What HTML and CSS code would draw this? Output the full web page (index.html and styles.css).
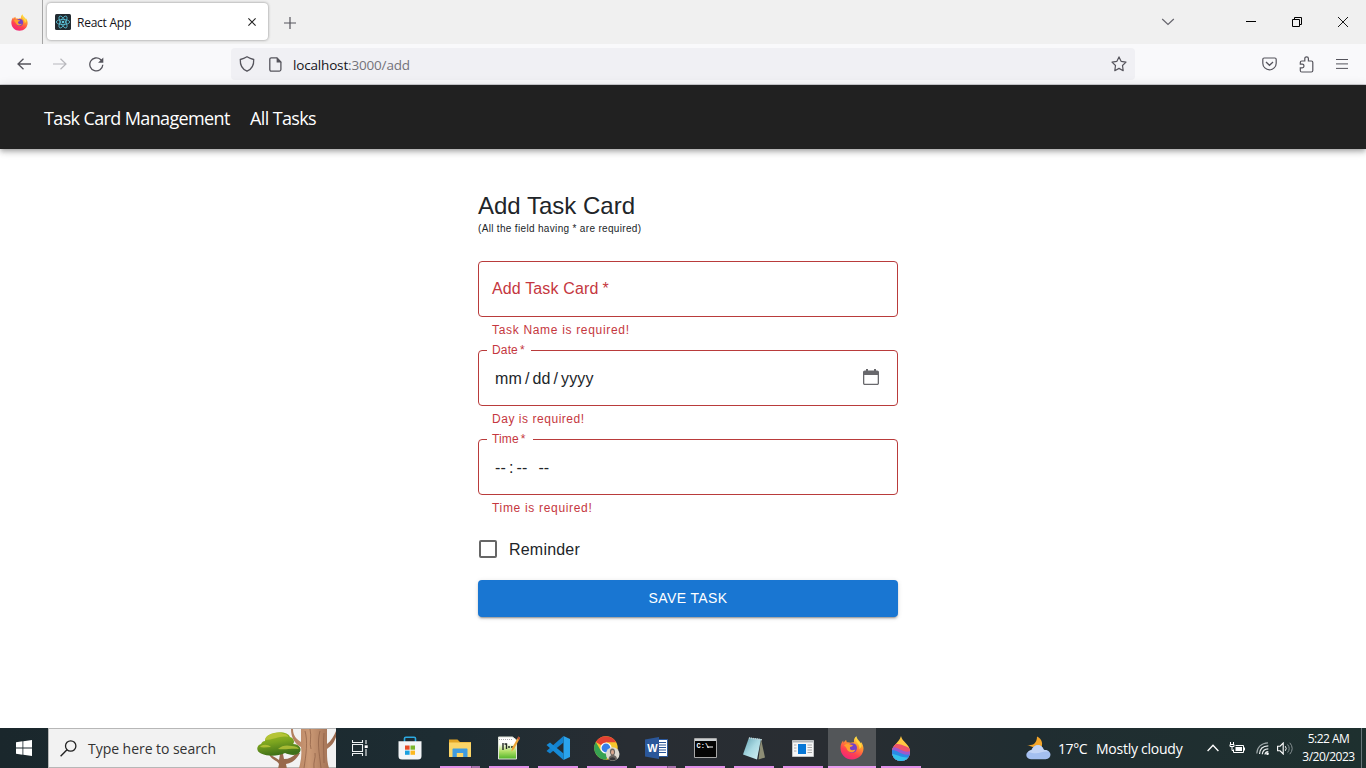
FILE: index.html
```html
<!DOCTYPE html>
<html lang="en">
<head>
<meta charset="utf-8">
<title>React App</title>
<link rel="stylesheet" href="styles.css">
</head>
<body>
<svg class="defs" width="0" height="0" aria-hidden="true">
  <defs>
    <linearGradient id="flame" x1=".8" y1="0" x2=".3" y2="1"><stop offset="0" stop-color="#fff44f"/><stop offset=".35" stop-color="#ff9a2e"/><stop offset=".7" stop-color="#ff4050"/><stop offset="1" stop-color="#f0247c"/></linearGradient>
    <symbol id="firefox" viewBox="0 0 24 24">
      <path fill="url(#flame)" d="M12 23.500C5.700 23.500.500 18.500.500 12.200c0-3 .8-5.600 2.600-7.700l.5 2.200C4.500 5.500 5 4.700 6.100 4l.7 2.300c1.400-.3 2.700 0 3.700.5 1.200-.5 2.300-.7 3.600-.6C13.500 3.700 14.600 1.500 16.500.300c.2 2.500 2 3.800 3.400 5.400l.9 1.800.2-1.600c1.700 2 2.500 4.200 2.500 6.700 0 6.300-5.100 10.900-11.500 10.900z"/>
      <circle cx="12.200" cy="12" r="4.800" fill="#7542c8"/>
      <path fill="#ffa02e" d="M4 9.500c2.100-2.100 4.400-2.200 6.100-.9l2.900.7c-.4 1.100-2.100 1.300-2.900 1.800-.7 1.700.4 3.200 2.200 3.200 1.300 0 2-.7 3-.4-1.200 2.400-4.500 3.300-6.900 1.300C6.600 13.700 6.700 11 4 9.500z"/>
      <path fill="#ffd83c" d="M16.300 2c-2 3.800 4.300 6 3 10.900 2.300-1.400 2.700-3.700 1.700-5.200-1.300-1.600-4.200-3-4.700-5.700z"/>
    </symbol>
  </defs>
</svg>
<div class="screen">
  <header class="tabstrip">
    <div class="pinned"><svg width="17" height="17"><use href="#firefox"/></svg></div>
    <div class="tab">
      <svg class="favicon" width="16" height="16" viewBox="0 0 16 16"><rect width="16" height="16" rx="1.500" fill="#222b31"/><g fill="none" stroke="#5cc4da" stroke-width=".8"><ellipse cx="8" cy="8" rx="6.700" ry="2.600"/><ellipse cx="8" cy="8" rx="6.700" ry="2.600" transform="rotate(60 8 8)"/><ellipse cx="8" cy="8" rx="6.700" ry="2.600" transform="rotate(120 8 8)"/></g><circle cx="8" cy="8" r="1.300" fill="#5cc4da"/></svg>
      <span class="tab-title">React App</span>
      <svg class="tab-close" width="8" height="8" viewBox="0 0 8 8"><path d="M.4.4l7.200 7.200M7.600.4L.4 7.600" stroke="#222" stroke-width="1.100"/></svg>
    </div>
    <svg class="newtab" width="12" height="12" viewBox="0 0 12 12"><path d="M6 0v12M0 6h12" stroke="#55545c" stroke-width="1.200"/></svg>
    <div class="window-controls">
      <svg class="chev" width="14" height="8" viewBox="0 0 14 8"><path d="M1.200 1L7 6.500 12.800 1" fill="none" stroke="#66656d" stroke-width="1.200"/></svg>
      <svg class="min" width="10" height="10" viewBox="0 0 10 10"><path d="M0 4.500h10" stroke="#000"/></svg>
      <svg class="max" width="10" height="10" viewBox="0 0 10 10"><path d="M.5 2.500h7v7h-7zM2.500 2.500v-2h7v7h-2" fill="none" stroke="#000"/></svg>
      <svg class="cls" width="10" height="10" viewBox="0 0 10 10"><path d="M0 0l10 10M10 0L0 10" stroke="#000" stroke-width=".9"/></svg>
    </div>
  </header>
  <nav class="toolbar">
    <svg class="back" width="14" height="12" viewBox="0 0 14 12"><path d="M14 6H1M6.500.7L1 6l5.500 5.300" fill="none" stroke="#55545c" stroke-width="1.300"/></svg>
    <svg class="fwd" width="14" height="12" viewBox="0 0 14 12"><path d="M0 6h13M7.500.7L13 6l-5.500 5.300" fill="none" stroke="#b8b8bd" stroke-width="1.200"/></svg>
    <svg class="reload" width="15" height="15" viewBox="0 0 15 15"><path d="M13.800 7.800A6.500 6.500 0 1 1 11.600 2.500L13 4" fill="none" stroke="#55545c" stroke-width="1.300"/><path d="M14.300.5v5.200H9.100z" fill="#55545c"/></svg>
    <div class="urlbar">
      <svg class="shield" width="16" height="16" viewBox="0 0 16 16"><path d="M8 .8C6 2 4 2.900 1.300 3.500c-.3 5.500 1.700 9.600 6.700 11.700 5-2.100 7-6.200 6.700-11.700C12 2.900 10 2 8 .8z" fill="none" stroke="#55545c" stroke-width="1.300"/></svg>
      <svg class="page" width="13" height="15" viewBox="0 0 13 15"><path d="M2.300.9H8l3.900 4v7.700c0 .9-.6 1.500-1.500 1.500H2.300c-.9 0-1.500-.6-1.500-1.500V2.400C.8 1.500 1.400.9 2.300.9z" fill="none" stroke="#55545c" stroke-width="1.300"/><path d="M7.600.5v4.900h4.900z" fill="#55545c"/></svg>
      <span class="url">localhost<span class="url-dim">:3000/add</span></span>
      <svg class="star" width="16" height="16" viewBox="0 0 16 16"><path d="M8 .9l2.100 4.400 4.900.8-3.500 3.400.7 5.200L8 12.400l-4.200 2.300.7-5.200L1 6.100l4.900-.8z" fill="none" stroke="#55545c" stroke-width="1.200" stroke-linejoin="round"/></svg>
    </div>
    <svg class="pocket" width="15" height="14" viewBox="0 0 15 14"><path d="M2.200 1h10.600c.8 0 1.400.6 1.400 1.400v3.900C14.200 10 11 12.800 7.500 12.800S.8 10 .8 6.300V2.400C.8 1.600 1.400 1 2.200 1z" fill="none" stroke="#55545c" stroke-width="1.200"/><path d="M4 5l3.500 3.300L11 5" fill="none" stroke="#55545c" stroke-width="1.300"/></svg>
    <svg class="puzzle" width="15" height="17" viewBox="0 0 15 17"><path d="M1.300 8.200V6.500c0-1 .5-1.500 1.500-1.500h3V2.600c0-2.300 3.600-2.300 3.600 0V5h3c1 0 1.400.5 1.400 1.500v8c0 1-.5 1.500-1.500 1.500H2.800c-1 0-1.500-.5-1.500-1.500v-2.600h1.900c2.400 0 2.400-3.700 0-3.700z" fill="none" stroke="#55545c" stroke-width="1.200"/></svg>
    <svg class="burger" width="12" height="10" viewBox="0 0 12 10"><path d="M0 .5h12M0 4.900h12M0 9.400h12" stroke="#55545c"/></svg>
  </nav>
  <div class="appbar">
    <a class="brand">Task Card Management</a>
    <a class="all">All Tasks</a>
  </div>
  <main class="content">
    <form class="form">
      <h1 class="title">Add Task Card</h1>
      <p class="hint">(All the field having * are required)</p>
      <div class="field"><span class="placeholder">Add Task Card<span class="ast">*</span></span></div>
      <p class="helper">Task Name is required!</p>
      <div class="field"><span class="label date">Date<span class="ast">*</span></span><span class="value">mm<i>/</i>dd<i>/</i>yyyy</span>
        <svg class="calendar" width="16" height="16" viewBox="0 0 16 16"><path d="M3 0h2v1.500h6V0h2v1.500h1.200c1 0 1.800.8 1.800 1.800v10.900c0 1-.8 1.800-1.800 1.800H1.800C.8 16 0 15.200 0 14.200V3.300c0-1 .8-1.800 1.800-1.800H3zM1.300 6v8.200c0 .4.2.6.6.6h12.200c.4 0 .6-.2.6-.6V6z" fill="#68686c"/></svg>
      </div>
      <p class="helper day">Day is required!</p>
      <div class="field"><span class="label time">Time<span class="ast">*</span></span><span class="value clock">--<i>:</i>--<b>--</b></span></div>
      <p class="helper">Time is required!</p>
      <div class="reminder"><span class="box"></span><span class="reminder-text">Reminder</span></div>
      <div class="save"><span>SAVE TASK</span></div>
    </form>
  </main>
  <footer class="taskbar">
    <div class="start"><svg width="16" height="16" viewBox="0 0 16 16" fill="#fff"><path d="M0 2.200l6.500-.9v6.300H0zM7.300 1.200L16 0v7.600H7.300zM0 8.400h6.500v6.300L0 13.800zM7.300 8.400H16V16l-8.700-1.200z"/></svg></div>
    <div class="search">
      <svg class="lens" width="17" height="17" viewBox="0 0 17 17"><circle cx="10.700" cy="6" r="5.200" fill="none" stroke="#222" stroke-width="1.300"/><path d="M7 9.800L.6 16.300" stroke="#222" stroke-width="1.400"/></svg>
      <span class="search-text">Type here to search</span>
      <svg class="trees" width="80" height="39" viewBox="0 0 80 39">
        <defs><linearGradient id="bark" x1="0" x2="1" y1="0" y2="0"><stop offset="0" stop-color="#b07c5c"/><stop offset=".4" stop-color="#cc9a76"/><stop offset="1" stop-color="#96664b"/></linearGradient><linearGradient id="leaf" x1="0" x2=".3" y1="0" y2="1"><stop offset="0" stop-color="#a9bf26"/><stop offset=".5" stop-color="#7ba41f"/><stop offset="1" stop-color="#3f7018"/></linearGradient></defs>
        <path d="M13 25l7 4 3 2 1-6h3l1 5c5 0 9-2 12-6h4c-4 7-8 10-14 11l1 5h-9l1-5c-2-4-8-4-10-10z" fill="#98694c"/>
        <path d="M5 24.500c-5-2-5-8 0-9.500 1-2 2-3 4-3 0-5 5-7 9-8 7-2 15 0 16 4 4 1 5 5 3 7 6 0 10 5 6 9-3 3-10 2-14 0-7 3-16 4-24 .5z" fill="url(#leaf)"/>
        <path d="M9 11c1-6 12-9 19-6 3 0 4 2 4 3-7-2-14 3-23 3zM4 18c2-3 8-3 11 0-4 0-7 1-11 0zM22 20c4-4 9-4 14-3 3 0 6 1 7 3-7-1-13 1-21 0z" fill="#c0ca3c" opacity=".75"/>
        <path d="M35 0h2c0 6 3 10 8 13V0h26v15c4-3 7-8 9-13v6c-2 6-5 9-9 12 0 7 0 13 2 19H43c2-7 3-14 2-21-6-3-10-9-10-18z" fill="url(#bark)"/>
        <path d="M49 2c3 10 1 24-1 37M54 0c2 8-1 14 1 20M64 2c-3 11-1 20 1 37M68 4c-1 10 0 20 0 30M59 24c1 5-2 9-1 15" stroke="#8a5d43" stroke-width=".9" opacity=".75" fill="none"/>
      </svg>
    </div>
    <div class="app plain view"><svg width="17" height="16" viewBox="0 0 17 16"><path d="M.5 0v2.500h10V0M.5 16v-2.500h10V16M.5 4.500h10v7H.5zM14 0v4M14 9v7" fill="none" stroke="#eef2f3" stroke-width="1.100"/><path d="M12.700 5.300h3v2.700h-3z" fill="#fff"/></svg></div>
    <div class="app plain store"><svg width="24" height="24" viewBox="0 0 24 24"><path d="M6.500 6V2.500c0-.8.5-1.300 1.300-1.300h8.400c.8 0 1.300.5 1.300 1.300V6" fill="none" stroke="#2caae2" stroke-width="1.600"/><path d="M.5 5.300h23V20c0 2.400-1.100 3.500-3.500 3.500H4C1.600 23.500.5 22.400.5 20z" fill="#f3f5f7"/><path fill="#e74b26" d="M7 9.500h4.600v4.200H7z"/><path fill="#7bb52a" d="M12.500 9.500H17v4.200h-4.500z"/><path fill="#1aa0df" d="M7 14.600h4.600v4.200H7z"/><path fill="#fcb81f" d="M12.500 14.600H17v4.200h-4.500z"/></svg></div>
    <div class="app multi"><svg width="22" height="20" viewBox="0 0 22 20"><path d="M0 1.500h8.500L11 4h11v15H0z" fill="#e2a424"/><path d="M0 4.500h22V18c0 .6-.4 1-1 1H1c-.6 0-1-.4-1-1z" fill="#fbd568"/><path d="M4.500 10.500h13c.6 0 1 .4 1 1V19h-4.300v-4H7.800v4H3.500v-7.500c0-.6.4-1 1-1z" fill="#3e9be0"/></svg></div>
    <div class="app"><svg width="22" height="24" viewBox="0 0 22 24"><defs><linearGradient id="npp" x1="0" x2="0" y1="0" y2="1"><stop offset=".3" stop-color="#fff"/><stop offset=".65" stop-color="#b2e067"/><stop offset="1" stop-color="#4fb329"/></linearGradient></defs><path d="M.5 1h14l4 3v19H.5z" fill="url(#npp)" stroke="#dfe4da"/><path d="M1 3.500h13" stroke="#aaa" stroke-dasharray="1 1"/><path d="M5 7v7M6.500 8h2v5M10 11h2M13 11h2" stroke="#252b25" stroke-width="1.400" fill="none"/><path d="M20.500.5L14 12l-.6 3.500L16.200 13l5.800-11z" fill="#eda537"/><path d="M20.500.5L22 2l-1 2-1.800-1.500z" fill="#b34937"/></svg></div>
    <div class="app"><svg width="24" height="24" viewBox="0 0 24 24"><path d="M17.500 0L24 3v18l-6.500 3z" fill="#2aa3ec"/><path d="M17.500 0v6.500L4 17.500.5 15z" fill="#1382cf"/><path d="M.5 9L4 6.500l13.500 11V24z" fill="#168bd8"/></svg></div>
    <div class="app"><svg width="26" height="25" viewBox="0 0 26 25"><circle cx="12" cy="12" r="11.700" fill="#f6c62e"/><path d="M12 12L1.800 6.100A11.700 11.700 0 0 1 22.200 6.200H12z" fill="#e34133"/><path d="M1.800 6.100A11.700 11.700 0 0 0 12 23.700l5-8.800H7z" fill="#37a252"/><circle cx="12" cy="12" r="5.600" fill="#fff"/><circle cx="12" cy="12" r="4.400" fill="#397fe8"/><circle cx="18.700" cy="18" r="6.800" fill="#ddd9d0"/><path d="M14.500 23.500c0-3 1.700-4 2.700-4.300-1.800-1.800-2-6.500 1-6.700 3.600-.1 3.400 5.400 1.800 6.700 1.800.4 3 1.600 3 4.400-2.500 1.500-6 1.600-8.500-.1z" fill="#6b6560"/><ellipse cx="18.500" cy="16.300" rx="1.500" ry="2.200" fill="#d5a58c"/><path d="M15.500 23.500c.5-3 5.500-3 6 0-2 1-4 1-6 0z" fill="#353436"/></svg></div>
    <div class="app multi"><svg width="23" height="22" viewBox="0 0 23 22"><path d="M11 2.500h11.500v17H11z" fill="#fff" stroke="#2a5699"/><path d="M14 5.500h7M14 8h7M14 10.500h7M14 13h7M14 15.500h7" stroke="#2a5699"/><path d="M0 2.500L14 0v22L0 19.500z" fill="#2b579a"/><text x="2.300" y="15" class="word-letter">W</text></svg></div>
    <div class="app"><svg width="23" height="20" viewBox="0 0 23 20"><path d="M.5.500h22v19H.5z" fill="#050505" stroke="#a8a8a8"/><path d="M1 1h21v2H1z" fill="#ccd0d2"/><text x="2.500" y="10" class="cmd-text">C:\</text><path d="M13 9h6" stroke="#fff"/></svg></div>
    <div class="app"><svg width="24" height="23" viewBox="0 0 24 23"><defs><linearGradient id="pad" x1="0" x2="1" y1="0" y2="1"><stop offset="0" stop-color="#5f9dae"/><stop offset=".5" stop-color="#a9d9e2"/><stop offset="1" stop-color="#d5eff3"/></linearGradient></defs><path d="M19 2l4 18.500-6.500 2z" fill="#8d8d75"/><path d="M7 .5l12 1.500-4 20.500L1 17.500z" fill="url(#pad)"/><path d="M7 1l13 1.800" stroke="#c5cfd2" stroke-width="1.500" stroke-dasharray="1 1"/></svg></div>
    <div class="app"><svg width="22" height="17" viewBox="0 0 22 17"><path d="M.5.500h21v16H.5z" fill="#f7f7f7" stroke="#c0c3c5"/><path d="M1 1h20v1.500H1z" fill="#b1b5b8"/><path d="M6 4h8v10H6z" fill="#0878d7"/><path d="M2 5h2.500M2 8h2.500M2 11h2.500M15.500 5H20M15.500 7.500H20M15.500 10H20M15.500 12.500H20" stroke="#aaa"/></svg></div>
    <div class="app active"><svg width="24" height="24"><use href="#firefox"/></svg></div>
    <div class="app"><svg width="20" height="25" viewBox="0 0 20 25"><defs><clipPath id="drop"><path d="M10 0c1 6 9 8 9 15.500C19 21 15.500 25 10 25S1 21 1 15.500C1 9 8 7 10 0z"/></clipPath></defs><g clip-path="url(#drop)"><path fill="#ffc642" d="M0 0h20v25H0z"/><path fill="#ed526c" d="M0 7c5 1 10 0 20 6v12H0z"/><path fill="#9b5ace" d="M0 11c8-1 12 7 20 4v10H0z"/><path fill="#2b8be5" d="M0 14c7-1 11 7 20 4v7H0z"/><path fill="#34c2ea" d="M0 18c6 0 11 5 20 3v4H0z"/></g></svg></div>
    <div class="tray">
      <svg class="weather" width="25" height="24" viewBox="0 0 25 24"><path d="M11 .5c5 2 7 8 3 13L1 9c5 1 10-1 10-8.500z" fill="#f4a62a"/><path d="M5 23.300c-6.500-.8-6-8.300 0-8.300C7 7.500 16 7.300 18 14c8-.4 8.700 8.500 1.500 9.300z" fill="#a4bff0"/><path d="M6 14c2.500-7 10-6.500 11.600-.3 2.500 0 4 .8 5 2.200-6-1.700-9 3.700-20.500 0C3 14.600 4.300 14 6 14z" fill="#c3d4f6"/></svg>
      <span class="temp">17°C</span><span class="sky">Mostly cloudy</span>
      <svg class="up" width="12" height="8" viewBox="0 0 12 8"><path d="M.6 7L6 1.200 11.400 7" fill="none" stroke="#fff" stroke-width="1.300"/></svg>
      <svg class="battery" width="16" height="12" viewBox="0 0 16 12"><path d="M6.500 3.500h8v7H4.500V7.500M1.500 0v2.500M4.500 0v2.500M1 2.500h4v2H1zM3 4.500v4h1.500" fill="none" stroke="#fff"/><path d="M6.500 5H13v4H6.500zM15 5.500h1v3h-1z" fill="#fff"/></svg>
      <svg class="wifi" width="13" height="13" viewBox="0 0 13 13"><g fill="none"><path d="M.8 11.500C1 5.300 5.300 1 12 .800" stroke="#9ba5a6" stroke-width="1.200"/><path d="M3.500 12C3.700 7 7 4 12.300 3.800M6.300 12.300c.2-3.300 2.200-5.400 6-5.500M9 12.500c.1-1.700 1.200-2.800 3.300-2.900" stroke="#e9eded" stroke-width="1.200"/></g><circle cx="11.500" cy="11.700" r="1.300" fill="#fff"/></svg>
      <svg class="sound" width="16" height="13" viewBox="0 0 16 13"><path d="M.6 4.200h2.500L6.200 1v11L3.100 8.800H.6z" fill="none" stroke="#fff" stroke-width="1.100"/><path d="M8.300 4.200q1.800 2.300 0 4.600" fill="none" stroke="#fff"/><path d="M10.600 2.500q3.200 4 0 8M12.800.800q4.800 5.700 0 11.400" fill="none" stroke="#879193"/></svg>
      <div class="clockbox"><span class="t1">5:22 AM</span><span class="t2">3/20/2023</span></div>
      <div class="peek"></div>
    </div>
  </footer>
</div>
</body>
</html>
```
FILE: styles.css
```css
* { box-sizing: border-box; }
body { margin: 0; background: #fff; font-family: "Open Sans", "Noto Sans", sans-serif; }
svg { display: block; flex: none; }
.defs { position: absolute; }
.screen { width: 1366px; height: 768px; display: flex; flex-direction: column; overflow: hidden; white-space: nowrap; }
.tabstrip { height: 44px; flex: none; display: flex; background: #f0f0f0; }
.pinned { width: 43px; padding: 14px 0 0 11px; border-right: 1px solid #a5a5a5; }
.tab { width: 221px; height: 37px; margin: 3px 0 0 4px; padding: 0 12px 0 8px; display: flex; align-items: center; background: #fff; border-radius: 4px; box-shadow: 0 0 3px rgba(0,0,0,.45); }
.tab-title { margin-left: 6px; font-size: 12px; letter-spacing: -.25px; color: #15141a; line-height: 18px; padding-top: 2px; }
.tab-close { margin-left: auto; }
.newtab { margin: 17px 0 0 16px; }
.window-controls { margin-left: auto; margin-right: 18px; display: flex; align-items: center; }
.min { margin-left: 71px; }
.max { margin-left: 36px; }
.cls { margin-left: 36px; }
.toolbar { height: 41px; flex: none; display: flex; align-items: center; background: #f9f9fb; border-bottom: 1px solid #cfcfd3; padding-left: 17px; }
.fwd { margin-left: 22px; }
.reload { margin-left: 22px; }
.urlbar { width: 904px; height: 32px; margin-left: 127px; padding: 0 8px; display: flex; align-items: center; background: #f0f0f4; border-radius: 4px; }
.page { margin-left: 14px; }
.url { margin-left: 11px; padding-top: 2px; font-size: 13.500px; letter-spacing: -.17px; color: #15141a; }
.url-dim { color: #74737a; }
.star { margin-left: auto; }
.pocket { margin-left: 127px; }
.puzzle { margin-left: 22px; }
.burger { margin-left: 22px; }
.appbar { height: 64px; flex: none; display: flex; align-items: center; padding: 1px 0 0 44px; background: #212121; color: #fff; font-size: 18px; box-shadow: 0 2px 4px -1px rgba(0,0,0,.2), 0 4px 5px rgba(0,0,0,.14), 0 1px 10px rgba(0,0,0,.12); }
.brand { width: 206px; letter-spacing: -.63px; }
.all { letter-spacing: -.63px; }
.content { height: 579px; flex: none; font-family: "Liberation Sans", Arial, sans-serif; color: #212529; }
.form { width: 420px; margin-left: 478px; padding-top: 42px; }
.title { margin: 0; height: 30px; font-size: 24px; line-height: 30px; font-weight: 400; }
.hint { margin: 0; height: 40px; font-size: 10px; line-height: 15px; letter-spacing: .33px; }
.field { position: relative; height: 56px; padding: 0 13px; display: flex; align-items: center; border: 1px solid #b93b3b; border-radius: 4px; }
.placeholder { font-size: 16px; color: #c53740; letter-spacing: .14px; }
.ast { margin-left: 4px; }
.label { position: absolute; left: 8px; top: -9px; height: 16px; padding-left: 5px; background: #fff; font-size: 12px; line-height: 16px; color: #c53740; letter-spacing: .15px; }
.label .ast { margin-left: 2px; }
.date { width: 44px; }
.time { width: 46px; }
.helper { margin: 3px 14px 10px; height: 20px; font-size: 12px; line-height: 20px; letter-spacing: .68px; color: #c53740; }
.day { letter-spacing: .54px; }
.value { margin-left: 3px; padding-top: 2px; font-size: 16px; letter-spacing: .12px; }
.value i { font-style: normal; margin: 0 3px; }
.clock { padding-top: 1px; }
.clock b { font-weight: 400; margin-left: 11px; }
.calendar { margin: 0 5px 2px auto; }
.reminder { height: 42px; margin-top: 10px; display: flex; align-items: center; gap: 12px; padding-left: 1px; font-size: 16px; }
.reminder-text { padding-top: 2px; letter-spacing: .2px; }
.box { width: 18px; height: 18px; border: 2px solid #666; border-radius: 2px; }
.save { height: 37px; margin-top: 10px; padding-bottom: 2px; display: flex; align-items: center; justify-content: center; background: #1976d2; color: #fff; border-radius: 4px; font-size: 14px; letter-spacing: .4px; box-shadow: 0 3px 1px -2px rgba(0,0,0,.2), 0 2px 2px rgba(0,0,0,.14), 0 1px 5px rgba(0,0,0,.12); }
.taskbar { height: 40px; flex: none; display: flex; background: linear-gradient(90deg, #1a272c 0, #1d2c32 32%, #282d33 46%, #292d32 60%, #202d31 75%, #1e302f 100%); color: #fff; }
.start { width: 48px; display: flex; align-items: center; justify-content: center; }
.search { width: 288px; display: flex; align-items: center; background: #f2f2f2; border: 1px solid #b7b7b7; border-right: 0; padding-left: 11px; }
.search-text { margin-left: 11px; font-size: 14px; letter-spacing: -.04px; color: #333; }
.trees { margin-left: auto; }
.app { width: 48px; margin-right: 1px; display: flex; align-items: center; justify-content: center; background: linear-gradient(#e08fe8, #e08fe8) 4px 100% / 40px 2px no-repeat; }
.app.multi { background-image: linear-gradient(90deg, #e08fe8 31px, #7f5a85 31px, #7f5a85 32px, #a871ae 32px); }
.app.plain { background: none; }
.view { margin-right: 2px; padding-bottom: 1px; }
.store { margin-right: 2px; }
.app.active { background: #535659 linear-gradient(#e99bef, #e99bef) 0 100% / 48px 2px no-repeat; }
.word-letter { font: 700 11px "Liberation Sans", sans-serif; fill: #fff; }
.cmd-text { font: 700 7px "Liberation Mono", monospace; fill: #fff; }
.tray { margin-left: auto; display: flex; align-items: center; }
.temp { margin-left: 7px; width: 38px; font-size: 14px; letter-spacing: -.4px; }
.sky { width: 111px; font-size: 14px; letter-spacing: -.25px; }
.battery { margin-left: 10px; }
.wifi { margin-left: 11px; }
.sound { margin-left: 8px; }
.clockbox { width: 68px; padding-left: 3px; display: flex; flex-direction: column; align-items: center; font-size: 12px; line-height: 18px; letter-spacing: -.5px; }
.peek { width: 5px; height: 40px; border-left: 1px solid #68767a; }
```
